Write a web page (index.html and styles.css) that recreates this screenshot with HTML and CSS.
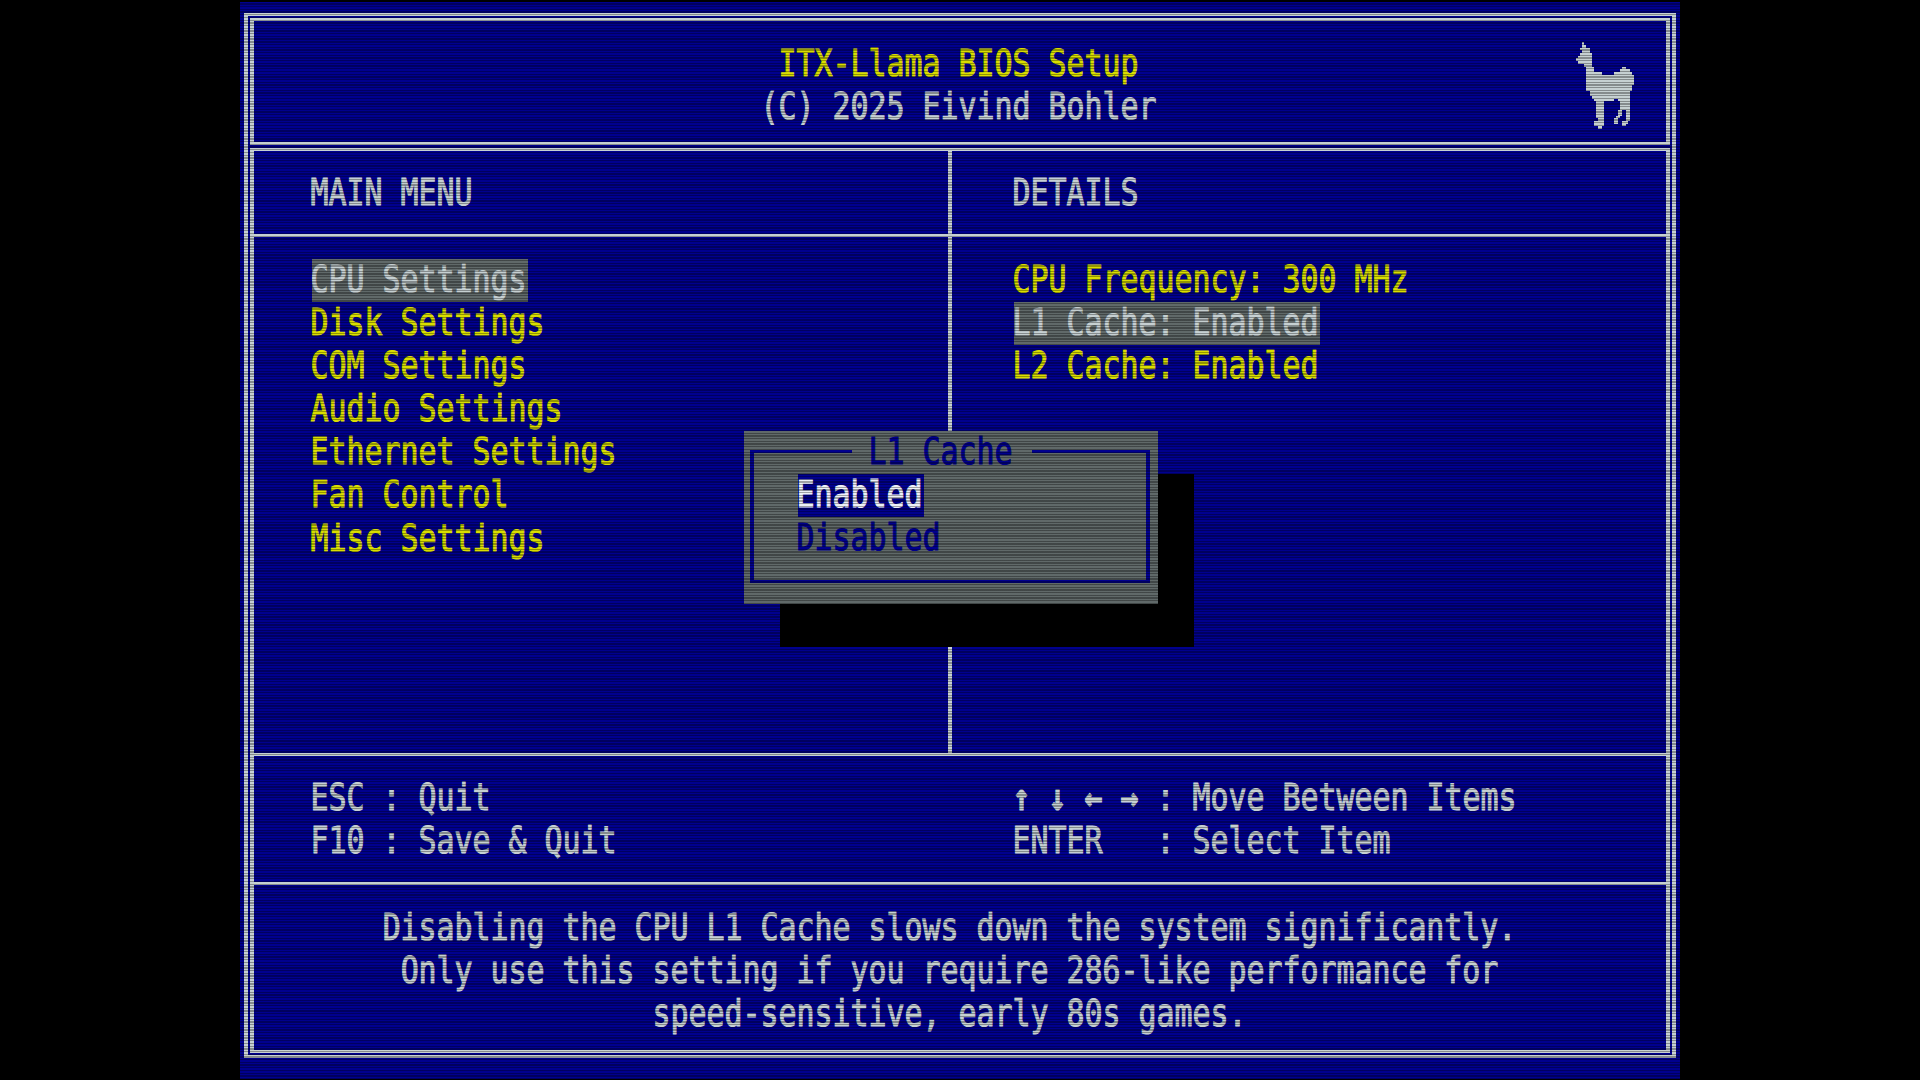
FILE: index.html
```html
<!DOCTYPE html>
<html lang="en">
<head>
<meta charset="utf-8">
<title>ITX-Llama BIOS Setup</title>
<link rel="stylesheet" href="styles.css">
</head>
<body>
<main class="screen">
  <div class="frame">
    <header class="header">
      <div class="line title"><span>ITX-Llama BIOS Setup</span></div>
      <div class="line"><span>(C) 2025 Eivind Bohler</span></div>
      <svg class="llama" viewBox="288 127 174 259" preserveAspectRatio="none" shape-rendering="crispEdges"><path d="M306 127H312V136H318V144H330V160H336V200H342V216H366V224H402V216H420V208H426V200H438V208H450V216H456V224H462V256H456V272H450V362H444V370H438V378H426V362H438V330H426V346H420V354H414V370H402V354H408V346H414V330H420V304H414V296H402V304H372V378H366V386H354V378H342V362H354V354H348V304H342V296H336V288H330V272H318V200H312V192H294V184H288V176H294V168H300V160H306V152H300V144H306Z"/></svg>
    </header>
    <div class="body">
      <div class="panels">
        <section class="panel">
          <h2 class="line heading"><span>MAIN MENU</span></h2>
          <div class="list">
            <div class="line selected"><span>CPU Settings</span></div>
            <div class="line"><span>Disk Settings</span></div>
            <div class="line"><span>COM Settings</span></div>
            <div class="line"><span>Audio Settings</span></div>
            <div class="line"><span>Ethernet Settings</span></div>
            <div class="line"><span>Fan Control</span></div>
            <div class="line"><span>Misc Settings</span></div>
          </div>
        </section>
        <section class="panel details">
          <h2 class="line heading"><span>DETAILS</span></h2>
          <div class="list">
            <div class="line"><span>CPU Frequency: 300 MHz</span></div>
            <div class="line selected"><span>L1 Cache: Enabled</span></div>
            <div class="line"><span>L2 Cache: Enabled</span></div>
          </div>
        </section>
      </div>
      <div class="keys">
        <div class="keycol">
          <div class="line"><span>ESC : Quit</span></div>
          <div class="line"><span>F10 : Save &amp; Quit</span></div>
        </div>
        <div class="keycol">
          <div class="line"><span><b>↑ ↓ ← →</b> : Move Between Items</span></div>
          <div class="line"><span>ENTER   : Select Item</span></div>
        </div>
      </div>
      <footer class="help">
        <div class="line"><span>Disabling the CPU L1 Cache slows down the system significantly.</span></div>
        <div class="line"><span>Only use this setting if you require 286-like performance for</span></div>
        <div class="line"><span>speed-sensitive, early 80s games.</span></div>
      </footer>
    </div>
  </div>
  <div class="dialog">
    <div class="dialog-frame"></div>
    <div class="line dialog-title"><span>L1 Cache</span></div>
    <div class="line option active"><span>Enabled</span></div>
    <div class="line option"><span>Disabled</span></div>
  </div>
  <div class="scanlines"></div>
</main>
</body>
</html>
```
FILE: styles.css
```css
:root {
  --row: 43.2px;
  --blue: #00008e;
  --silver: #c6d0d2;
  --yellow: #dade00;
  --gray: #606969;
}

* { box-sizing: border-box; }

body {
  margin: 0;
  height: 1080px;
  overflow: hidden;
  background: #000;
  color: var(--silver);
  font: 29.9px/43.2px "DejaVu Sans Mono", monospace;
}

.screen {
  position: relative;
  width: 1440px;
  height: 1077px;
  margin: 2px auto 0;
  padding: 11px 4px 21px;
  background: var(--blue);
}

.frame {
  height: 1045px;
  padding: 2px;
  border: solid var(--silver);
  border-width: 3px 4px;
  display: flex;
  flex-direction: column;
  gap: 3px;
}

.header {
  position: relative;
  height: 127px;
  padding-top: 21.5px;
  border: solid var(--silver);
  border-width: 3px 4px;
  text-align: center;
}

.llama {
  position: absolute;
  right: 32px;
  top: 21px;
  width: 58px;
  height: 87px;
  fill: var(--silver);
}

.line {
  height: var(--row);
  margin: 0;
  font-weight: 400;
  white-space: pre;
}

/* Tall text-mode cells: glyphs are stretched up from the baseline. */
.line span {
  display: inline-block;
  height: var(--row);
  transform: translate(-1.5px, 0.6px) scaleY(1.24);
  transform-origin: 0 32px;
  -webkit-text-stroke: 0.9px currentColor;
}

.title { color: var(--yellow); }

.body {
  flex: 1;
  display: flex;
  flex-direction: column;
  border: solid var(--silver);
  border-width: 3px 4px;
}

.panels {
  height: 605px;
  display: grid;
  grid-template-columns: 694px 1fr;
  border-bottom: 3px solid var(--silver);
}

.details { border-left: 4px solid var(--silver); }

.heading {
  height: 86px;
  padding: 21px 0 0 58px;
  border-bottom: 3px solid var(--silver);
  font-size: inherit;
}

.list {
  padding: 21.5px 0 0 58px;
  color: var(--yellow);
}

.details .heading,
.details .list { padding-left: 62px; }

.selected {
  width: max-content;
  background: var(--gray);
  color: var(--silver);
}

.keys {
  height: 129px;
  padding: 21px 0 0 58px;
  display: grid;
  grid-template-columns: 702px 1fr;
  border-bottom: 3px solid var(--silver);
}

.help {
  padding: 21.5px 18px 0 0;
  text-align: center;
}

.dialog {
  position: absolute;
  left: 504px;
  top: 429px;
  width: 414px;
  height: 173px;
  background: var(--gray);
  color: var(--blue);
  box-shadow: 36px 43px 0 #000;
}

.dialog-frame {
  position: absolute;
  inset: 19px 8px 21px 6px;
  border: solid var(--blue);
  border-width: 3px 4px;
}

.dialog-title {
  position: relative;
  width: 180px;
  margin-left: 108px;
  padding-left: 18px;
  background: var(--gray);
}

.option {
  position: relative;
  width: max-content;
  margin-left: 54px;
}

.active {
  background: var(--blue);
  color: #eef2f8;
}

.scanlines {
  position: absolute;
  inset: 0;
  background: repeating-linear-gradient(to bottom, rgba(0,0,0,0) 0 1.35px, rgba(0,0,0,.33) 1.35px 2.7px);
}
```
